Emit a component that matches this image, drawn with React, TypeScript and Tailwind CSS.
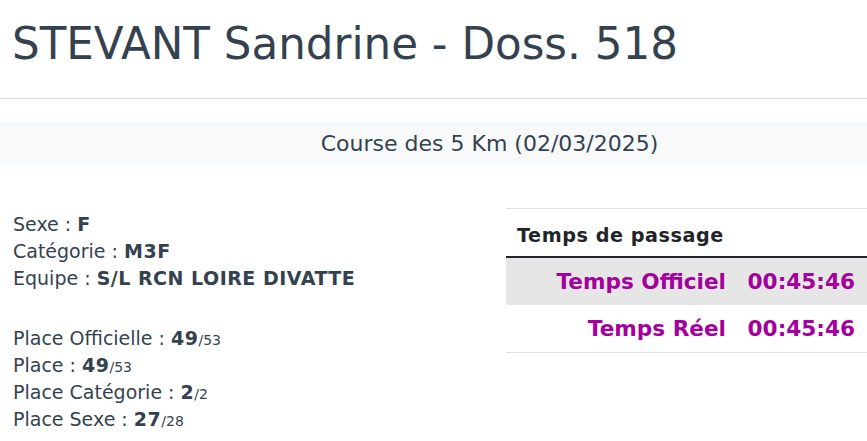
export default function App() {
  const font = { fontFamily: '"DejaVu Sans", Verdana, sans-serif' };
  return (
    <div style={font} className="w-[867px] h-[441px] overflow-hidden bg-white text-[#34424f]">
      <h1 className="pt-[17px] pl-[12px] text-[43.6px] leading-[54px] font-normal">
        STEVANT Sandrine - Doss. 518
      </h1>
      <hr className="mt-[27px] border-0 border-t border-[#dee2e6]" />
      <div className="mt-[22px] h-[45px] bg-[#f8f9fa] flex items-center justify-center pl-[112px]">
        <h5 className="text-[22px] leading-[27px] font-normal">Course des 5 Km (02/03/2025)</h5>
      </div>
      <div className="flex mt-[44px]">
        <div className="w-[506px] pl-[13px] text-[19px] leading-[27px]">
          <div className="mt-[1px]">
            <div>
              Sexe : <b className="tracking-[0.5px]">F</b>
            </div>
            <div>
              Catégorie : <b className="tracking-[0.5px]">M3F</b>
            </div>
            <div>
              Equipe : <b className="tracking-[0.5px]">S/L RCN LOIRE DIVATTE</b>
            </div>
          </div>
          <div className="mt-[33px]">
            <div>
              Place Officielle : <b className="tracking-[0.5px]">49</b>
              <small className="text-[14px] leading-none">/53</small>
            </div>
            <div>
              Place : <b className="tracking-[0.5px]">49</b>
              <small className="text-[14px] leading-none">/53</small>
            </div>
            <div>
              Place Catégorie : <b className="tracking-[0.5px]">2</b>
              <small className="text-[14px] leading-none">/2</small>
            </div>
            <div>
              Place Sexe : <b className="tracking-[0.5px]">27</b>
              <small className="text-[14px] leading-none">/28</small>
            </div>
          </div>
        </div>
        <div className="flex-1 mt-[-2px]">
          <table className="w-full border-collapse">
            <thead>
              <tr className="border-t border-[#dee2e6] border-b-2 border-b-[#212529]">
                <th
                  colSpan={2}
                  className="text-left pl-[11px] pt-[13px] pb-[7px] text-[19.2px] leading-[27px] font-bold tracking-[0.55px] text-[#212529]"
                >
                  Temps de passage
                </th>
              </tr>
            </thead>
            <tbody className="text-[21.6px] leading-[27px] font-bold text-[#a3009e]">
              <tr className="bg-[#e6e6e6]">
                <td className="text-right py-[10px] pr-[11px]">Temps Officiel</td>
                <td className="text-right py-[10px] pr-[12px] w-[130px]">00:45:46</td>
              </tr>
              <tr className="border-b border-[#dee2e6]">
                <td className="text-right py-[10px] pr-[11px]">Temps Réel</td>
                <td className="text-right py-[10px] pr-[12px] w-[130px]">00:45:46</td>
              </tr>
            </tbody>
          </table>
        </div>
      </div>
    </div>
  );
}
